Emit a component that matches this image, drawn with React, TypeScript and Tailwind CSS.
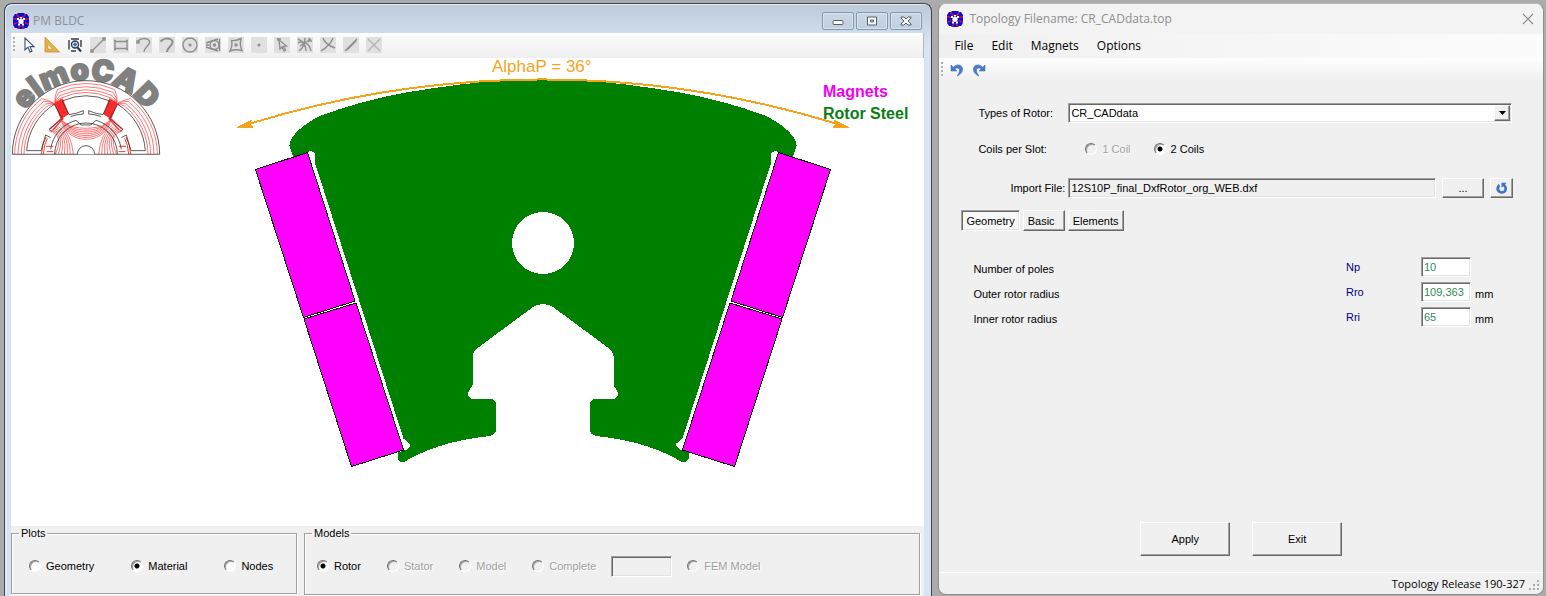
/**
 * App.tsx
 *
 * Motor design workspace: the PM BLDC plot window on the left and the
 * topology editor on the right.
 */

import { useState } from 'react';
import type { ReactNode } from 'react';

const RADIO =
  'appearance-none size-3 shrink-0 rounded-full border border-t-[#707070] border-l-[#707070] border-r-white border-b-white bg-white shadow-[inset_1px_1px_0_#a0a0a0] checked:bg-[radial-gradient(circle,#000_2px,transparent_3px)] disabled:bg-transparent';
const SUNKEN =
  'border border-t-[#a0a0a0] border-l-[#a0a0a0] border-r-white border-b-white shadow-[inset_1px_1px_0_#696969,inset_-1px_-1px_0_#e3e3e3]';
const RAISED =
  'border border-t-white border-l-white border-r-[#696969] border-b-[#696969] shadow-[inset_-1px_-1px_0_#a0a0a0] bg-[#f0f0f0]';

/** Small blue rotor mark shown in both title bars. */
function AppIcon() {
  return (
    <svg viewBox="0 0 16 16" className="size-4 shrink-0" aria-hidden="true">
      <path d="M5 0h6l1 1h2l2 3v8l-2 3h-2l-1 1H5l-1-1H2l-2-3V4l2-3h2z" fill="#0c0cd8" />
      <path
        d="M3.500 1L6 4.500M12.500 1L10 4.500M0 5.500l4 1M16 5.500l-4 1M0 11.500l4-2M16 11.500l-4-2M5.500 16L7 12M10.500 16L9 12M5.500 4.500h5"
        stroke="#c01848"
        strokeWidth="1.500"
        fill="none"
      />
      <path d="M4 5h2v2H4zM10 5h2v2h-2zM7 4h2v1.500H7zM5 10.500h2v2H5zM9 10.500h2v2H9z" fill="#fff" />
      <circle cx="8" cy="8.300" r="2.600" fill="#fff" />
    </svg>
  );
}

interface Tool {
  label: string;
  disabled?: boolean;
  icon: ReactNode;
}

const TOOLS: Tool[] = [
  {
    label: 'Select',
    icon: <path d="M4 1v12l3-2.800 2 4.800 2-.9-2-4.500h4z" fill="#fff" stroke="#34506e" strokeWidth="1.100" />,
  },
  {
    label: 'Measure',
    icon: (
      <>
        <path d="M1 0v15h14.500z" fill="#e6b04a" stroke="#c8902a" strokeWidth=".8" />
        <path d="M4 7.500V12h4.500z" fill="#fff" stroke="#c8902a" strokeWidth=".6" />
      </>
    ),
  },
  {
    label: 'Zoom window',
    icon: (
      <g fill="none" stroke="#333c48" strokeWidth="1.400">
        <path d="M4 2h8M4 14h5M2 3v9.500M14 3v7" />
        <circle cx="8" cy="7.500" r="3.500" fill="#e8f0f8" />
        <path d="M8 5.500v4M6 7.500h4" stroke="#2c60a0" />
        <path d="M10.500 10.500l3.500 4" strokeWidth="2.200" />
      </g>
    ),
  },
  { label: 'Line', disabled: true, icon: <path d="M2 14L14 2M1 13h2v2H1zM13 1h2v2h-2z" /> },
  { label: 'Rectangle', disabled: true, icon: <path d="M2 4.500h12v7H2zM1 3.500h2M13 3.500h2M1 12.500h2M13 12.500h2" /> },
  { label: 'Arc by start', disabled: true, icon: <path d="M1.500 4.500C4 1.500 9 .5 12 2.500c3 2 1 5-1 7-1.500 1.500-3 3-3 5.500M1 4h2v2H1z" /> },
  { label: 'Arc by centre', disabled: true, icon: <path d="M1.500 4.500C4 1.500 9 .5 12 2.500c3 2 1 5-1 7-1.500 1.500-3 3-3 5.500" strokeWidth="2" /> },
  { label: 'Circle', disabled: true, icon: <><circle cx="8" cy="8" r="7" /><circle cx="8" cy="8" r=".8" /></> },
  { label: 'Tangent circle', disabled: true, icon: <><circle cx="9.500" cy="8" r="4.500" /><circle cx="9.500" cy="8" r="1" /><path d="M1 6l12-4M1 10l12 4M1 8h3M14.500 2v12" /></> },
  { label: 'Polygon', disabled: true, icon: <><path d="M3.500 3.500C7 4 10 3 13 1.500c-1 4-1 8 1 12-4-1-8-1-12 .5 2-4 2.500-7 1.500-10.500z" /><circle cx="8" cy="8" r="1" /></> },
  { label: 'Point', disabled: true, icon: <circle cx="8" cy="8" r=".8" /> },
  { label: 'Pick node', disabled: true, icon: <path d="M5 3l1 9 2-2 2 4 1.500-1-2-3.500 3-.5zM3 2h4M4 1v3" /> },
  { label: 'Trim', disabled: true, icon: <path d="M1 2C5 4 9 8 9 14M2 14C6 11 8 7 8 1M14 2L3 9M1 6c6-3 11 0 13 8M12 1v3h3" /> },
  { label: 'Break', disabled: true, icon: <path d="M3 1c1 4 4 7 12 10M13 1C11 7 6 11 1 14" /> },
  { label: 'Extend', disabled: true, icon: <path d="M2 14L14 2M4 13l9-9" /> },
  { label: 'Delete', disabled: true, icon: <path d="M2 2l12 12M14 2L2 14" stroke="#b4b4b4" /> },
];

/** elmoCAD mark: a half machine cross section with flux lines. */
function Logo() {
  const yoke = [214, 204, 194, 186];
  const rotor = [0, 9, 18, 27, 36, 45, 54];
  return (
    <g>
      <defs>
        <path id="logo-arc" d="M11 155A75 75 0 0 1 161 155" />
      </defs>
      <text fill="#808080" stroke="#808080" strokeWidth="1.600" fontSize="30" className="font-[Inter,sans-serif] font-black" textAnchor="middle">
        <textPath href="#logo-arc" startOffset="50%">elmoCAD</textPath>
      </text>
      <g transform="translate(86 154.300) scale(.3333)" fill="none" strokeWidth="2.400">
        <path d="M-221 0A221 221 0 0 1 221 0z" fill="#fff" />
        <g stroke="#f33" strokeWidth="2">
          {yoke.map((r) => (
            <g key={r}>
              <path d={`M${-r} 0A${r} ${r} 0 0 1 ${-r * 0.62} ${-r * 0.78}Q-88 -158 -82 -135`} />
              <path d={`M${r} 0A${r} ${r} 0 0 0 ${r * 0.62} ${-r * 0.78}Q88 -158 82 -135`} />
              <path d={`M-80 -140Q-104 -152 ${-r * 0.4} ${-r * 0.91}A${r} ${r} 0 0 1 ${r * 0.4} ${-r * 0.91}Q104 -152 80 -140`} />
            </g>
          ))}
          {rotor.map((d) => (
            <g key={d}>
              <path d={`M${-75 + d / 3} ${-105 + d / 4}C${-60 + d * 0.4} ${-25 - d * 0.9} ${60 - d * 0.4} ${-25 - d * 0.9} ${75 - d / 3} ${-105 + d / 4}`} />
              <path d={`M${-110 + d * 0.6} ${-70 - d * 0.3}Q${-65 + d * 0.4} -60 ${-92 + d} 0`} />
              <path d={`M${110 - d * 0.6} ${-70 - d * 0.3}Q${65 - d * 0.4} -60 ${92 - d} 0`} />
            </g>
          ))}
          <path d="M-134 0Q-132 -30 -120 -52M-128 0Q-126 -30 -116 -48M134 0Q132 -30 120 -52M128 0Q126 -30 116 -48M-118 -8h20M98 -8h20M-120 -24h22M98 -24h22" strokeWidth="3" />
        </g>
        <path d="M-94 -153L-71 -167L-53 -121L-75 -107zM94 -153L71 -167L53 -121L75 -107z" fill="#ff2a2a" stroke="#f22" />
        <path d="M-75 -107L-108 -76M-68 -108L-100 -72M75 -107L108 -76M68 -108L100 -72" stroke="#f33" strokeWidth="4" />
        <g stroke="#333">
          <path d="M-221 0A221 221 0 0 1 221 0z" />
          <path d="M-178 -11A177 177 0 0 1 -95 -150L-71 -107L-111 -75L-101 -68M-178 -11H-135" />
          <path d="M178 -11A177 177 0 0 0 95 -150L71 -107L111 -75L101 -68M178 -11H135" />
          <path d="M-71 -160A176 176 0 0 1 71 -160L51 -119A130 130 0 0 1 8 -131V-121A122 122 0 0 1 46 -113M-71 -160L-51 -119A130 130 0 0 0 -8 -131V-121A122 122 0 0 0 -46 -113" />
          <path d="M-135 -11L-121 -58L-106 -50M135 -11L121 -58L106 -50" />
          <path d="M-94 0A94 94 0 0 1 94 0M-106 -15A106 106 0 0 1 -30 -102L-15 -88H15L30 -102A106 106 0 0 1 106 -15" />
          <path d="M-26 0A26 26 0 0 1 26 0" fill="#fff" />
        </g>
      </g>
    </g>
  );
}

/** One stack of two magnets, drawn on the left side of the pole. */
function MagnetPair() {
  return (
    <g fill="#ff00ff" stroke="#000" strokeWidth="1">
      <path d="M255.500 169.500L307.500 152.500L355 301L303.500 317.500z" />
      <path d="M304 319L356 303L403.500 450L351.500 466.500z" />
    </g>
  );
}

const STEEL_LEFT =
  'M543 79C530 79 520 79 510 80C480 81.500 445 86 406 92.500C375 98 345 106.500 320 116C300 126 289 138 289.500 146L293 157L307.500 152L310.500 151L315 153V163L403.500 438.500L409.500 443.500L410 446L406.500 449.500L397.500 452.500V459Q399 462 403 462.500C425 450 448 440.500 490 436Q496 434 496 430V403L492.500 399H472Q467 397 468 392.500L472.500 385V356Q473 352 477.500 348L533 307Q538 304 543 304z';

function PoleDrawing() {
  return (
    <svg
      viewBox="11 58 913 468"
      preserveAspectRatio="xMinYMin meet"
      className="block w-full flex-1 min-h-0 bg-white"
      role="img"
      aria-label="Rotor pole cross section"
    >
      <g shapeRendering="crispEdges">
        <g id="pole-half">
          <path d={STEEL_LEFT} fill="#008000" />
          <path d="M542 79h2v225h-2z" fill="#008000" />
          <MagnetPair />
        </g>
        <use href="#pole-half" transform="translate(1086 0) scale(-1 1)" />
        <circle cx="543" cy="243" r="31" fill="#fff" />
      </g>
      <g className="font-['Liberation_Sans',sans-serif]" fontSize="16">
        <text x="492" y="72" fill="#f5a31a" fontSize="17">AlphaP = 36°</text>
        <text x="823" y="97" fill="#f000f0" fontWeight="700">Magnets</text>
        <text x="823" y="119" fill="#0a7d14" fontWeight="700">Rotor Steel</text>
      </g>
      <g shapeRendering="crispEdges">
        <path d="M241 126.500A993 993 0 0 1 845 126.500" fill="none" stroke="#f5a31a" strokeWidth="2" />
        <path d="M237 127.500L252 120L249 124L253 127zM849 127.500L834 120L837 124L833 127z" fill="#f5a31a" stroke="#f5a31a" />
      </g>
      <Logo />
    </svg>
  );
}

interface RadioItemProps {
  name: string;
  label: string;
  checked: boolean;
  disabled?: boolean;
  onSelect: (label: string) => void;
}

function RadioItem({ name, label, checked, disabled, onSelect }: RadioItemProps) {
  return (
    <label
      className={
        disabled
          ? 'flex items-center gap-[5px] text-[#a0a0a0] [text-shadow:1px_1px_0_#fff]'
          : 'flex items-center gap-[5px]'
      }
    >
      <input
        type="radio"
        name={name}
        checked={checked}
        disabled={disabled}
        onChange={() => onSelect(label)}
        className={RADIO}
      />
      {label}
    </label>
  );
}

function Grip() {
  return <span className="h-4 w-[2px] shrink-0 bg-[repeating-linear-gradient(#b0b0b0_0_2px,transparent_2px_4px)]" />;
}

const FRAME_BUTTON =
  'flex h-[18px] w-8 items-center justify-center rounded-[2px] border border-[#8497ad] bg-linear-to-b from-[#cbd8e6] to-[#c0cfdf] shadow-[inset_0_0_0_1px_#d9e4ef]';

function PlotWindow() {
  const [plot, setPlot] = useState('Material');
  const [model, setModel] = useState('Rotor');

  return (
    <section className="flex min-w-0 flex-[914_1_0%] flex-col rounded-t-lg border border-b-0 border-[#3d464f] bg-[#d7e4f2] bg-linear-to-b from-[#bccad9] to-[#d7e4f2] to-[40px] pl-[6px] pr-[7px] shadow-[inset_1px_1px_0_#e4edf6]">
      {/* Title bar */}
      <header className="flex h-[29px] shrink-0 items-center gap-1 px-[2px] pt-[5px]">
        <AppIcon />
        <h1 className="flex-1 font-['Open_Sans',sans-serif] text-[12px] text-[#8b929a]">PM BLDC</h1>
        <div className="flex gap-[2px]">
          <button type="button" aria-label="Minimize" className={FRAME_BUTTON}>
            <svg viewBox="0 0 12 10" className="h-[10px] w-3"><rect x="1" y="4.500" width="10" height="4" rx="1" fill="#fff" stroke="#555f6b" /></svg>
          </button>
          <button type="button" aria-label="Maximize" className={FRAME_BUTTON}>
            <svg viewBox="0 0 12 10" className="h-[10px] w-3"><path d="M1.500 1h9v8h-9zM4.500 4h3v2h-3z" fill="#fff" fillRule="evenodd" stroke="#555f6b" /></svg>
          </button>
          <button type="button" aria-label="Close" className={FRAME_BUTTON}>
            <svg viewBox="0 0 12 10" className="h-[10px] w-3"><path d="M1 1h3l2 2 2-2h3v1L8 5l3 3v1H8L6 7 4 9H1V8l3-3-3-3z" fill="#fff" stroke="#555f6b" /></svg>
          </button>
        </div>
      </header>

      {/* Drawing tools */}
      <div className="flex h-[25px] shrink-0 items-center border-r border-[#b8b8b8] bg-linear-to-b from-[#fdfdfd] to-[#efefef] pb-px pl-[2px]" role="toolbar" aria-label="Drawing tools">
        <Grip />
        <span className="w-[2px]" />
        {TOOLS.map((tool) => (
          <button
            key={tool.label}
            type="button"
            aria-label={tool.label}
            disabled={tool.disabled}
            className="flex h-6 w-[23px] items-center justify-center"
          >
            <svg
              viewBox="0 0 16 16"
              className={tool.disabled ? 'size-4 bg-[#e0e0e0]' : 'size-4'}
              fill="none"
              stroke="#8e8e8e"
              strokeWidth="1.400"
            >
              {tool.icon}
            </svg>
          </button>
        ))}
      </div>

      <PoleDrawing />

      {/* Plot and model pickers */}
      <div className="flex h-[70px] shrink-0 items-start gap-[7px] bg-[#f0f0f0] pr-1">
        <fieldset className="h-[68px] w-[286px] border border-[#a0a0a0] px-[17px] shadow-[inset_1px_1px_0_#fff,1px_1px_0_#fff]">
          <legend className="-ml-[10px] px-[2px] leading-[14px]">Plots</legend>
          <div className="flex h-[52px] items-center gap-[37px]">
            {['Geometry', 'Material', 'Nodes'].map((item) => (
              <RadioItem key={item} name="plot" label={item} checked={plot === item} onSelect={setPlot} />
            ))}
          </div>
        </fieldset>
        <fieldset className="h-[69px] min-w-0 flex-1 border border-[#a0a0a0] px-3 shadow-[inset_1px_1px_0_#fff,1px_1px_0_#fff]">
          <legend className="-ml-[5px] px-[2px] leading-[14px]">Models</legend>
          <div className="flex h-[52px] items-center gap-[15px]">
            <div className="flex gap-[26px]">
              {['Rotor', 'Stator', 'Model', 'Complete'].map((item) => (
                <RadioItem
                  key={item}
                  name="model"
                  label={item}
                  checked={model === item}
                  disabled={item !== 'Rotor'}
                  onSelect={setModel}
                />
              ))}
            </div>
            <input type="text" aria-label="Part count" disabled className={`h-[21px] w-[61px] bg-[#f0f0f0] px-1 ${SUNKEN}`} />
            <RadioItem name="model" label="FEM Model" checked={false} disabled onSelect={setModel} />
          </div>
        </fieldset>
      </div>
    </section>
  );
}

const PARAMS = [
  { id: 'np', label: 'Number of poles', symbol: 'Np', value: '10', unit: '' },
  { id: 'rro', label: 'Outer rotor radius', symbol: 'Rro', value: '109,363', unit: 'mm' },
  { id: 'rri', label: 'Inner rotor radius', symbol: 'Rri', value: '65', unit: 'mm' },
];

function TopologyWindow() {
  const [coils, setCoils] = useState('2 Coils');
  const [tab, setTab] = useState('Geometry');

  return (
    <section className="mb-px flex min-w-0 flex-[604_1_0%] flex-col rounded-lg border border-[#8f8f8f] border-t-[#b8b8b8] bg-[#f0f0f0]">
      {/* Title bar */}
      <header className="flex h-[30px] shrink-0 items-center gap-[6px] rounded-t-lg bg-[#f3f3f3] pl-2 pr-[7px]">
        <AppIcon />
        <h2 className="flex-1 font-['Open_Sans',sans-serif] text-[12px] text-[#8f8f8f]">Topology Filename: CR_CADdata.top</h2>
        <button type="button" aria-label="Close" className="flex w-4 justify-center">
          <svg viewBox="0 0 12 12" className="size-3" stroke="#8a8a8a" strokeWidth="1.100"><path d="M1 1l10 10M11 1L1 11" /></svg>
        </button>
      </header>

      {/* Menu */}
      <nav className="flex h-6 shrink-0 items-center gap-[18px] bg-linear-to-r from-[#f0f0f0] to-[#fcfcfc] px-[15px] font-['Open_Sans',sans-serif] text-[12px]" aria-label="Main menu">
        {['File', 'Edit', 'Magnets', 'Options'].map((item) => (
          <button key={item} type="button">{item}</button>
        ))}
      </nav>
      <div className="flex h-[23px] shrink-0 items-center gap-[6px] bg-linear-to-b from-[#fefefe] to-[#f0f0f0] pl-[2px]">
        <Grip />
        <button type="button" aria-label="Undo" className="flex w-4 justify-center">
          <svg viewBox="0 0 14 14" className="size-[14px]"><path d="M1 2v6h6L5 6c2-2 5-1 4.500 2-.3 2-1.500 3.500-2.500 5 4-1.500 6-4.500 5.500-7.500C12 1.500 6.500.5 3.500 4.200z" fill="#4a7ad0" stroke="#3564b8" strokeWidth=".5" /></svg>
        </button>
        <button type="button" aria-label="Redo" className="flex w-4 justify-center">
          <svg viewBox="0 0 14 14" className="size-[14px]"><path d="M13 2v6H7l2-2C7 4 4 5 4.500 8c.3 2 1.500 3.500 2.500 5-4-1.500-6-4.500-5.500-7.500C2 1.500 7.500.5 10.500 4.200z" fill="#4a7ad0" stroke="#3564b8" strokeWidth=".5" /></svg>
        </button>
      </div>

      <form className="flex flex-1 flex-col" onSubmit={(e) => e.preventDefault()}>
        {/* Rotor source */}
        <div className="flex flex-col pl-[39px] pr-[31px] pt-[22px]">
          <div className="flex h-5 items-center">
            <label htmlFor="rotor-type" className="w-[90px] shrink-0">Types of Rotor:</label>
            <div className={`flex h-5 flex-1 bg-white p-px ${SUNKEN}`}>
              <div className="relative flex flex-1">
                <select id="rotor-type" className="h-full w-full appearance-none bg-transparent pl-px outline-none">
                  <option>CR_CADdata</option>
                </select>
                <span className={`pointer-events-none absolute inset-y-0 right-0 flex w-4 items-center justify-center ${RAISED}`}>
                  <svg viewBox="0 0 7 4" className="h-1 w-[7px]"><path d="M0 0h7L3.500 4z" /></svg>
                </span>
              </div>
            </div>
          </div>

          <div className="mt-4 flex h-5 items-center" role="radiogroup" aria-labelledby="coils-label">
            <span id="coils-label" className="w-[107px] shrink-0">Coils per Slot:</span>
            <div className="flex gap-[23px]">
              {['1 Coil', '2 Coils'].map((item) => (
                <RadioItem key={item} name="coils" label={item} checked={coils === item} disabled={item === '1 Coil'} onSelect={setCoils} />
              ))}
            </div>
          </div>
        </div>

        <div className="mt-[19px] flex items-center pl-[39px] pr-[30px]">
          <label htmlFor="import-file" className="w-[90px] shrink-0 pr-[3px] text-right">Import File:</label>
          <input id="import-file" type="text" readOnly value="12S10P_final_DxfRotor_org_WEB.dxf" className={`h-5 min-w-0 flex-1 bg-[#f0f0f0] px-[2px] outline-none ${SUNKEN}`} />
          <button type="button" aria-label="Browse" className={`ml-[6px] h-5 w-[42px] ${RAISED}`}>...</button>
          <button type="button" aria-label="Reload" className={`ml-[6px] flex h-5 w-[23px] items-center justify-center ${RAISED}`}>
            <svg viewBox="0 0 14 14" className="size-[14px]"><path d="M4 3C1 5 .5 9 3 11.300c2.500 2.200 7 1.800 8.500-1.300 1.200-2.700.3-5-1.500-6.500l1.500-1.700H6.500v5l1.700-1.500c1.300 1 1.600 2.700.7 4-1 1.200-3 1.200-4 0C3.800 8 4 6.500 5.200 5.500z" fill="#3f70cc" /></svg>
          </button>
        </div>

        {/* Pages */}
        <div className="mt-3 flex gap-[3px] pl-[22px]" role="tablist">
          {['Geometry', 'Basic', 'Elements'].map((item) => (
            <button
              key={item}
              type="button"
              role="tab"
              aria-selected={tab === item}
              onClick={() => setTab(item)}
              className={`h-[21px] min-w-[42px] px-1 text-left ${tab === item ? `bg-[#f8f8f8] ${SUNKEN}` : RAISED}`}
            >
              {item}
            </button>
          ))}
        </div>

        <div className="mt-[26px] flex flex-col gap-[5px] pl-[34px] pr-[35px]">
          {PARAMS.map((param) => (
            <div key={param.id} className="flex h-5 items-center">
              <label htmlFor={param.id} className="flex-1 pt-1">{param.label}</label>
              <span className="w-[75px] text-[#000080]">{param.symbol}</span>
              <input id={param.id} type="text" defaultValue={param.value} className={`h-5 w-[50px] bg-white px-[2px] text-[#2e8b57] outline-none ${SUNKEN}`} />
              <span className="w-[37px] pl-1 pt-1">{param.unit}</span>
            </div>
          ))}
        </div>

        <div className="mt-auto mb-4 flex justify-center gap-[22px]">
          <button type="submit" className={`h-[34px] w-[90px] ${RAISED}`}>Apply</button>
          <button type="button" className={`h-[34px] w-[90px] ${RAISED}`}>Exit</button>
        </div>
      </form>

      {/* Status bar */}
      <footer className="flex h-[22px] shrink-0 items-center justify-end border-t border-white pr-[3px] font-['Open_Sans',sans-serif] text-[11px]">
        Topology Release 190-327
        <svg viewBox="0 0 11 11" className="ml-1 mt-1 size-[11px]" fill="#aaa"><path d="M8 0h2v2H8zM4 4h2v2H4zM8 4h2v2H8zM0 8h2v2H0zM4 8h2v2H4zM8 8h2v2H8z" /></svg>
      </footer>
    </section>
  );
}

export default function App() {
  return (
    <main className="flex h-screen gap-[6px] bg-[#ababab] pl-1 pr-[2px] pt-[3px] font-['Liberation_Sans',Arial,sans-serif] text-[11px] leading-4 text-black">
      <PlotWindow />
      <TopologyWindow />
    </main>
  );
}
